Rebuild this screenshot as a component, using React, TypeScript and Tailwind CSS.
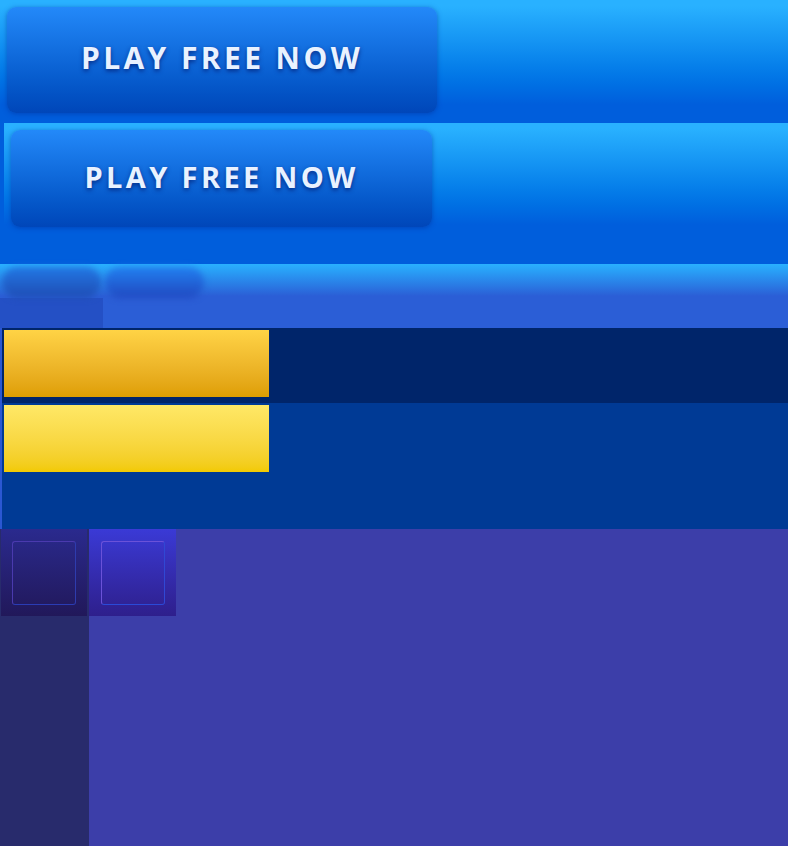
const label = 'PLAY FREE NOW';

function PlayButton({ size }: { size: 'lg' | 'md' }) {
  const box =
    size === 'lg'
      ? 'w-[430px] h-[106px] text-[30px] pb-[5px]'
      : 'w-[421px] h-[97px] text-[29px] pb-[3px]';
  return (
    <button
      className={`${box} flex items-center justify-center rounded-[9px] bg-gradient-to-b from-[#2389f9] to-[#0046b9] font-bold tracking-[3.4px] text-[#e9f2ff] shadow-[0_1px_5px_rgba(0,50,160,0.55)] [text-shadow:0_2px_4px_rgba(0,25,110,0.75)]`}
      style={{ fontFamily: '"Open Sans", "Liberation Sans", sans-serif' }}
    >
      {label}
    </button>
  );
}

function Tile({ active }: { active?: boolean }) {
  return (
    <div
      className={
        active
          ? 'w-[87px] h-[87px] pt-[12px] pl-[12px] bg-gradient-to-b from-[#3a3ad6] to-[#2e1f8c]'
          : 'w-[86px] h-[87px] pt-[12px] pl-[11px] bg-gradient-to-b from-[#2a2a8e] to-[#21185a]'
      }
    >
      <div
        className={
          active
            ? 'w-[64px] h-[64px] rounded-[3px] border border-t-[#6a52d8] border-l-[#6a52d8] border-b-[#2a4ad8] border-r-[#3048d4]'
            : 'w-[64px] h-[64px] rounded-[3px] border border-t-[#4a3aae] border-l-[#4a3aae] border-b-[#2a3cb4] border-r-[#2e3cae]'
        }
      />
    </div>
  );
}

export default function App() {
  return (
    <div className="w-[788px] h-[846px] flex flex-col overflow-hidden">
      {/* hero cta */}
      <section className="h-[123px] shrink-0 px-[7px] pt-[7px] bg-gradient-to-b from-[#29b1ff] from-5% to-[#005edc] to-85%">
        <PlayButton size="lg" />
      </section>

      {/* compact cta */}
      <section className="h-[141px] shrink-0 pl-[4px] bg-[#005edc]">
        <div className="h-[107px] px-[7px] pt-[7px] bg-gradient-to-b from-[#29b1ff] from-5% to-[#005edc] to-95%">
          <PlayButton size="md" />
        </div>
      </section>

      {/* tabs */}
      <section className="h-[64px] shrink-0 flex bg-gradient-to-b from-[#29b1ff] to-[#2b5ed6] to-50%">
        <div className="w-[103px] flex flex-col">
          <div className="h-[34px] pt-[3px] pl-[2px]">
            <div className="w-[99px] h-[31px] rounded-full bg-gradient-to-b from-[#2278e4] to-[#1f4cb4] blur-[3px]" />
          </div>
          <div className="flex-1 bg-[#2450c5]" />
        </div>
        <div className="pt-[3px] pl-[2px]">
          <div className="w-[99px] h-[31px] rounded-full bg-gradient-to-b from-[#2280f0] to-[#2148c0] blur-[3px]" />
        </div>
      </section>

      {/* progress rows */}
      <section className="h-[201px] shrink-0 pl-[2px] bg-[#2b57d2]">
        <div className="h-[75px] p-[2px] bg-[#00256a]">
          <div className="w-[265px] h-[67px] bg-gradient-to-b from-[#ffd345] to-[#de9e00]" />
        </div>
        <div className="h-[126px] p-[2px] bg-[#003a95]">
          <div className="w-[265px] h-[67px] bg-gradient-to-b from-[#ffe866] to-[#f2ca00]" />
        </div>
      </section>

      {/* inventory */}
      <section className="flex-1 flex bg-[#3c3ea9]">
        <div className="w-[89px] bg-[#282b6c] pl-[1px]">
          <Tile />
        </div>
        <div>
          <Tile active />
        </div>
      </section>
    </div>
  );
}
